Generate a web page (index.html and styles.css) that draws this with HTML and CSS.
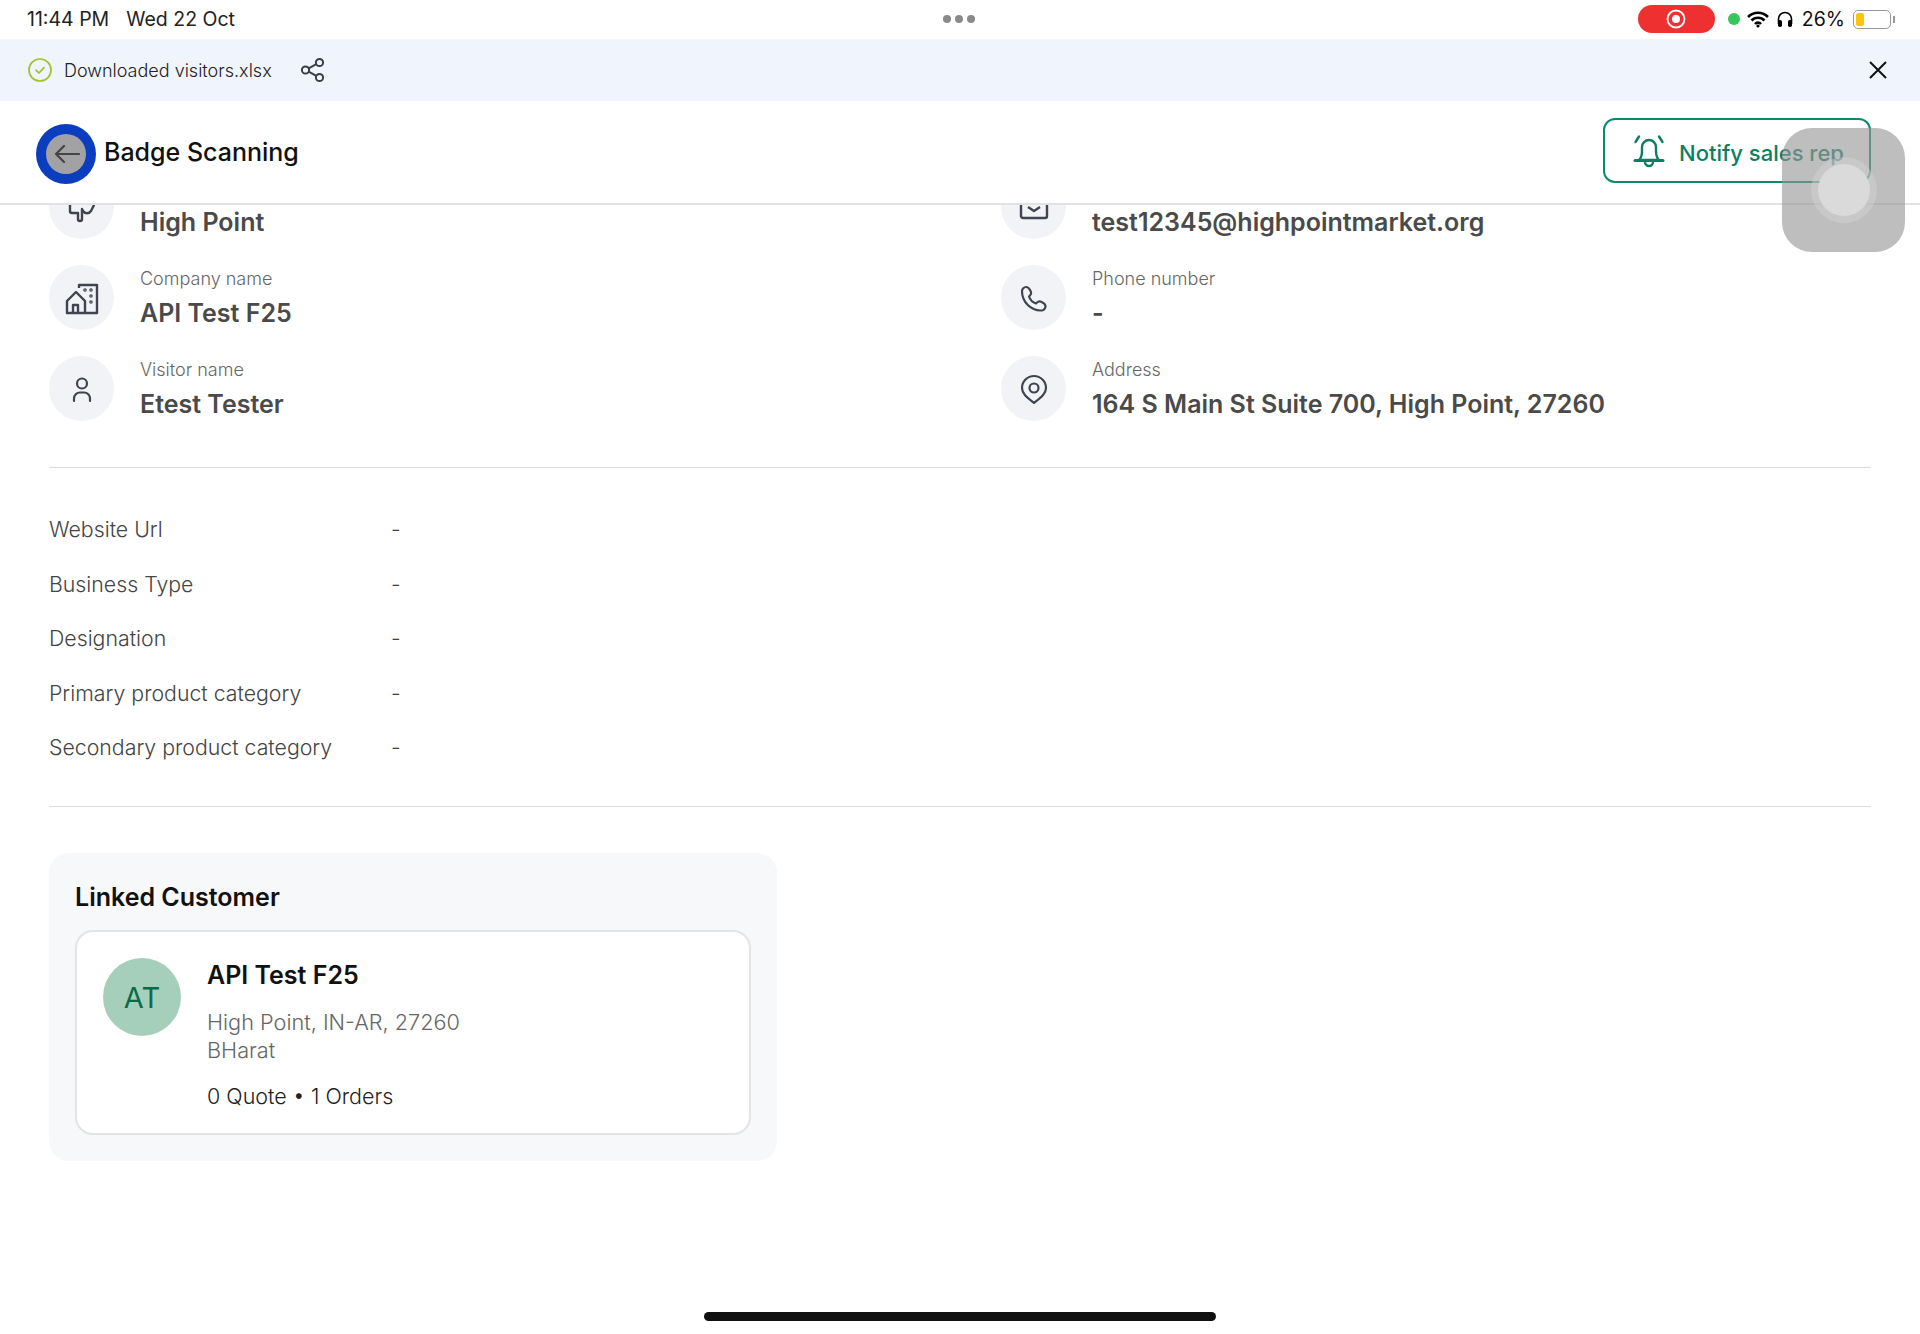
FILE: index.html

```html
<!DOCTYPE html>
<html lang="en">
<head>
<meta charset="utf-8"/>
<title>Badge Scanning</title>
<link rel="stylesheet" href="styles.css">
</head>
<body>
<div class="status-bar">
  <div class="status-left">
    <span>11:44 PM</span>
    <span>Wed 22 Oct</span>
  </div>
  <div class="status-dots"><i></i><i></i><i></i></div>
  <div class="status-right">
    <div class="rec-pill">
      <svg width="20" height="20" viewBox="0 0 20 20"><circle cx="10" cy="10" r="8.500" fill="none" stroke="#fff" stroke-width="1.800"/><circle cx="10" cy="10" r="4" fill="#fff"/></svg>
    </div>
    <span class="green-dot"></span>
    <svg width="24" height="18" viewBox="0 0 24 18"><path d="M2 7a14 14 0 0 1 20 0M5.500 10.500a9 9 0 0 1 13 0M9 14a4 4 0 0 1 6 0" fill="none" stroke="#000" stroke-width="2.600"/><circle cx="12" cy="16" r="1.600"/></svg>
    <svg width="18" height="18" viewBox="0 0 18 18"><path d="M2.500 14V9a6.500 6.500 0 0 1 13 0v5" fill="none" stroke="#000" stroke-width="1.600"/><rect x="2" y="10" width="4" height="7" rx="1.800"/><rect x="12" y="10" width="4" height="7" rx="1.800"/></svg>
    <span class="battery-text">26%</span>
    <div class="battery"><div class="battery-level"></div></div>
    <span class="battery-cap"></span>
  </div>
</div>

<div class="banner">
  <svg width="24" height="24" viewBox="0 0 24 24" fill="none" stroke="#a4bf2f" stroke-width="1.700"><circle cx="12" cy="12" r="11"/><path d="M8 12.200l3 2.800 5-5.400" stroke-linecap="round" stroke-linejoin="round"/></svg>
  <span class="banner-text">Downloaded visitors.xlsx</span>
  <svg class="share-icon" width="26" height="26" viewBox="0 0 26 26" fill="none" stroke="#3a3f4a" stroke-width="2"><circle cx="19.500" cy="5.500" r="3.600"/><circle cx="5.500" cy="13" r="3.600"/><circle cx="19.500" cy="20.500" r="3.600"/><path d="M8.700 11.300l7.600-4.100M8.700 14.700l7.600 4.100"/></svg>
  <svg class="close-icon" width="20" height="20" viewBox="0 0 20 20" fill="none" stroke="#111" stroke-width="2"><path d="M2 2l16 16M18 2L2 18"/></svg>
</div>

<div class="header">
  <div class="back-btn">
    <div class="back-inner">
      <svg width="28" height="24" viewBox="0 0 28 24" fill="none" stroke="#444" stroke-width="2.200" stroke-linecap="round" stroke-linejoin="round"><path d="M27 12H4M12 4l-8 8 8 8"/></svg>
    </div>
  </div>
  <h1>Badge Scanning</h1>
  <button class="notify-btn">
    <svg width="34" height="36" viewBox="0 0 34 36" fill="none" stroke="#0b7f62" stroke-width="2.400" stroke-linecap="round" stroke-linejoin="round"><path d="M7 27c2-2 3-5 3-9v-4a7 7 0 0 1 14 0v4c0 4 1 7 3 9z"/><path d="M3 27.500h28" stroke-width="3"/><path d="M13 29a4 4 0 0 0 8 0"/><path d="M3.500 9L7 3.500M30.500 9L27 3.500"/></svg>
    <span>Notify sales rep</span>
  </button>
</div>

<div class="content">
  <div class="info-grid">
    <div class="info-item">
      <div class="info-icon">
        <svg width="32" height="32" viewBox="0 0 32 32" fill="none" stroke="#3f444f" stroke-width="2.400" stroke-linecap="round" stroke-linejoin="round"><path d="M4 14v6a2 2 0 0 0 2 2h6v6a2 2 0 0 0 4 0v-10l1 2c2 3 6 3 8 0l3-6"/></svg>
      </div>
      <div class="info-text"><div class="info-label">City</div><div class="info-value">High Point</div></div>
    </div>
    <div class="info-item">
      <div class="info-icon">
        <svg width="32" height="32" viewBox="0 0 32 32" fill="none" stroke="#3f444f" stroke-width="2.400" stroke-linejoin="round"><rect x="3" y="4" width="26" height="23" rx="2"/><path d="M10 16l6 4 6-4"/></svg>
      </div>
      <div class="info-text"><div class="info-label">Email</div><div class="info-value">test12345@highpointmarket.org</div></div>
    </div>
    <div class="info-item">
      <div class="info-icon">
        <svg width="34" height="34" viewBox="0 0 34 34" fill="none" stroke="#3f444f" stroke-width="2.400" stroke-linejoin="round"><path d="M14 7V4h18v28H2V20l9-9 9 9v12"/><path d="M8 32v-8h5v8"/><circle cx="20" cy="9" r=".6"/><circle cx="26" cy="9" r=".6"/><circle cx="26" cy="15" r=".6"/><circle cx="26" cy="21" r=".6"/></svg>
      </div>
      <div class="info-text"><div class="info-label">Company name</div><div class="info-value">API Test F25</div></div>
    </div>
    <div class="info-item">
      <div class="info-icon">
        <svg width="30" height="30" viewBox="0 0 30 30" fill="none" stroke="#3f444f" stroke-width="2.200" stroke-linejoin="round"><path d="M3 8c0-2 2-4 4-4s3 1 4 3l1 2c.5 1.500 0 2.500-1 3.500l-1 1c1 3 4 6 7 7l1-1c1-1 2-1.500 3.500-1l2 1c2 1 3 2 3 4s-2 4-4 4C12 28 3 19 3 8z"/></svg>
      </div>
      <div class="info-text"><div class="info-label">Phone number</div><div class="info-value">-</div></div>
    </div>
    <div class="info-item">
      <div class="info-icon">
        <svg width="30" height="30" viewBox="0 0 30 30" fill="none" stroke="#3f444f" stroke-width="2.200" stroke-linecap="round"><circle cx="15" cy="9.500" r="5"/><path d="M7 27v-2.500a6 6 0 0 1 6-6h4a6 6 0 0 1 6 6V27"/></svg>
      </div>
      <div class="info-text"><div class="info-label">Visitor name</div><div class="info-value">Etest Tester</div></div>
    </div>
    <div class="info-item">
      <div class="info-icon">
        <svg width="30" height="30" viewBox="0 0 30 30" fill="none" stroke="#3f444f" stroke-width="2.200" stroke-linejoin="round"><path d="M15 29C9 24 3 20 3 14a12 12 0 0 1 24 0c0 6-6 10-12 15z"/><circle cx="15" cy="14" r="4.500"/></svg>
      </div>
      <div class="info-text"><div class="info-label">Address</div><div class="info-value">164 S Main St Suite 700, High Point, 27260</div></div>
    </div>
  </div>

  <hr class="divider first-divider">

  <div class="detail-list">
    <div class="detail-row"><span>Website Url</span><span>-</span></div>
    <div class="detail-row"><span>Business Type</span><span>-</span></div>
    <div class="detail-row"><span>Designation</span><span>-</span></div>
    <div class="detail-row"><span>Primary product category</span><span>-</span></div>
    <div class="detail-row"><span>Secondary product category</span><span>-</span></div>
  </div>

  <hr class="divider">

  <div class="linked-panel">
    <h3>Linked Customer</h3>
    <div class="customer-card">
      <div class="avatar">AT</div>
      <div>
        <div class="customer-name">API Test F25</div>
        <div class="customer-address">High Point, IN-AR, 27260<br>BHarat</div>
        <div class="customer-stats">0 Quote • 1 Orders</div>
      </div>
    </div>
  </div>
</div>

<div class="assist-touch"><div class="assist-dot"></div></div>
<div class="home-bar"></div>
</body>
</html>
```

FILE: styles.css

```css
html, body { margin: 0; padding: 0; }
body { width: 1920px; height: 1334px; overflow: hidden; position: relative; background: white; font-family: Inter, "Liberation Sans", sans-serif; color: #111; }

.status-bar { height: 39px; display: flex; align-items: center; justify-content: space-between; padding: 0 25px 1px 27px; font-size: 19.5px; position: relative; box-sizing: border-box; }
.status-left { display: flex; gap: 17px; color: #222; }
.status-dots { position: absolute; left: 943px; top: 15px; display: flex; gap: 4px; }
.status-dots i { width: 8px; height: 8px; border-radius: 50%; background: #8a8a8a; }
.status-right { display: flex; align-items: center; gap: 6px; }
.rec-pill { width: 77px; height: 28px; background: #ee3030; border-radius: 14px; display: flex; align-items: center; justify-content: center; margin-right: 7px; }
.green-dot { width: 12px; height: 12px; background: #34c759; border-radius: 50%; }
.battery-text { margin: 0 2px; }
.battery { width: 38px; height: 19px; border: 1.5px solid #999; border-radius: 5px; padding: 2px; box-sizing: border-box; }
.battery-level { width: 8px; height: 100%; background: #fcc40a; border-radius: 2px; }
.battery-cap { width: 2px; height: 7px; background: #999; margin-left: -4px; }

.banner { height: 62px; background: #eff4fd; display: flex; align-items: center; padding: 0 32px 0 28px; box-sizing: border-box; }
.banner-text { font-size: 18px; font-weight: 300; margin-left: 12px; color: #222; }
.share-icon { margin-left: 28px; }
.close-icon { margin-left: auto; }

.header { height: 102px; border-bottom: 2px solid #e2e2e2; display: flex; align-items: center; padding: 0 49px 0 36px; background: white; position: relative; z-index: 1; }
.back-btn { width: 60px; height: 60px; margin-top: 3px; border-radius: 50%; background: #0b3dbf; display: flex; align-items: center; justify-content: center; }
.back-inner { width: 40px; height: 40px; border-radius: 50%; background: #a2a2a4; display: flex; align-items: center; justify-content: center; }
.header h1 { font-size: 25px; font-weight: 500; margin: 0 0 0 8px; color: #111; }
.notify-btn { margin-left: auto; margin-top: -3px; width: 268px; height: 65px; border: 2px solid #0b8a6c; border-radius: 12px; background: white; color: #0b7f62; font-family: Inter, sans-serif; font-size: 22px; font-weight: 500; display: flex; align-items: center; justify-content: center; gap: 13px; padding: 0 0 0 2px; }
.notify-btn span { margin-top: 4px; }

.content { padding: 0 49px; margin-top: -31px; }
.info-grid { display: grid; grid-template-columns: 952px 1fr; row-gap: 26px; }
.info-item { display: flex; gap: 26px; height: 65px; }
.info-icon { width: 65px; height: 65px; flex: none; border-radius: 50%; background: #f2f3f7; display: flex; align-items: center; justify-content: center; }
.info-text { padding-top: 2px; }
.info-label { font-size: 18px; font-weight: 300; color: #666; line-height: 24px; }
.info-value { font-size: 25px; font-weight: 600; color: #4a4a4a; line-height: 36px; margin-top: 4px; }

.divider { border: 0; border-top: 1px solid #dcdcdc; margin: 0; }
.first-divider { margin-top: 46px; }

.detail-list { padding: 34px 0 31.500px; }
.detail-row { display: grid; grid-template-columns: 342px 1fr; height: 54.500px; align-items: center; font-size: 21.300px; font-weight: 300; color: #444; }

.linked-panel { width: 728px; height: 308px; margin-top: 46px; padding: 26px; box-sizing: border-box; background: #f7f8fa; border-radius: 20px; }
.linked-panel h3 { font-size: 25px; font-weight: 600; margin: 0 0 15px; line-height: 36px; }
.customer-card { height: 205px; box-sizing: border-box; background: white; border: 2px solid #e3e4e6; border-radius: 18px; padding: 26px; display: flex; gap: 26px; }
.avatar { width: 78px; height: 78px; flex: none; border-radius: 50%; background: #a5cfbb; color: #0c6a4a; font-size: 29px; font-weight: 400; display: flex; align-items: center; justify-content: center; }
.customer-name { font-size: 25px; font-weight: 600; line-height: 32px; margin-top: 1px; }
.customer-address { font-size: 21.700px; font-weight: 300; color: #666; line-height: 28px; margin-top: 17px; }
.customer-stats { font-size: 21.500px; font-weight: 300; color: #222; margin-top: 18px; line-height: 28px; }

.assist-touch { position: absolute; left: 1782px; top: 128px; width: 123px; height: 124px; border-radius: 30px; background: rgba(150,150,150,.62); z-index: 2; display: flex; align-items: center; justify-content: center; }
.assist-dot { width: 52px; height: 52px; border-radius: 50%; background: #dadada; box-shadow: 0 0 0 7px rgba(215,215,215,.4); }
.home-bar { position: absolute; left: 704px; top: 1312px; width: 512px; height: 9px; border-radius: 5px; background: #111; }
```
